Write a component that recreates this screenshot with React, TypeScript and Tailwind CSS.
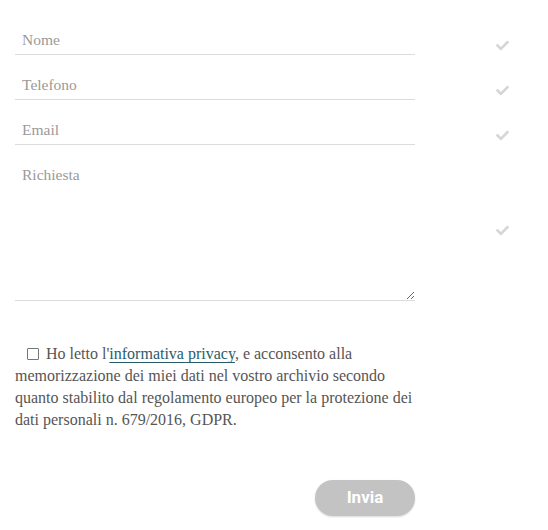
import { FaCheck } from 'react-icons/fa';

const serif = { fontFamily: '"Liberation Serif", "DejaVu Serif", serif' };

function Check() {
  return <FaCheck className="h-[13px] w-[13px] text-[#d6d6d6]" />;
}

function Field({ placeholder }: { placeholder: string }) {
  return (
    <div className="flex h-[45px] items-end">
      <input
        type="text"
        placeholder={placeholder}
        className="h-[29px] w-[400px] border-b border-[#dcdcdc] px-[7px] text-[15.5px] text-[#555] outline-none placeholder:text-[#9a9a9a]"
        style={serif}
      />
      <div className="mb-[3px] ml-[81px]">
        <Check />
      </div>
    </div>
  );
}

export default function App() {
  return (
    <div className="min-h-[530px] w-[548px] bg-white pl-[15px] pt-[10px]" style={serif}>
      <Field placeholder="Nome" />
      <Field placeholder="Telefono" />
      <Field placeholder="Email" />
      <div className="mt-[15px] flex items-center">
        <textarea
          placeholder="Richiesta"
          className="h-[141px] w-[400px] border-b border-[#dcdcdc] px-[7px] pt-[5px] text-[15.5px] leading-[20px] text-[#555] outline-none placeholder:text-[#9a9a9a]"
          style={serif}
        />
        <div className="ml-[81px]">
          <Check />
        </div>
      </div>

      <p className="mt-[42px] w-[400px] text-[16px] leading-[22px] text-[#555]">
        <input
          type="checkbox"
          className="mb-[-1px] ml-[12px] mr-[7px] h-[12px] w-[12px] appearance-none rounded-[1px] border border-[#777] bg-white align-baseline"
        />
        Ho letto l'
        <a href="#" className="text-[#2a5c6a] underline decoration-[#2a5c6a] underline-offset-[3px]">
          informativa privacy
        </a>
        , e acconsento alla memorizzazione dei miei dati nel vostro archivio secondo quanto stabilito dal
        regolamento europeo per la protezione dei dati personali n. 679/2016, GDPR.
      </p>

      <div className="mt-[49px] flex w-[400px] justify-end">
        <button
          type="button"
          className="h-[36px] w-[100px] rounded-full bg-[#c3c3c3] text-[17px] font-bold text-white shadow-[0_1px_2px_rgba(0,0,0,0.15)]"
          style={{ fontFamily: 'Roboto, "Liberation Sans", sans-serif' }}
        >
          Invia
        </button>
      </div>
    </div>
  );
}
